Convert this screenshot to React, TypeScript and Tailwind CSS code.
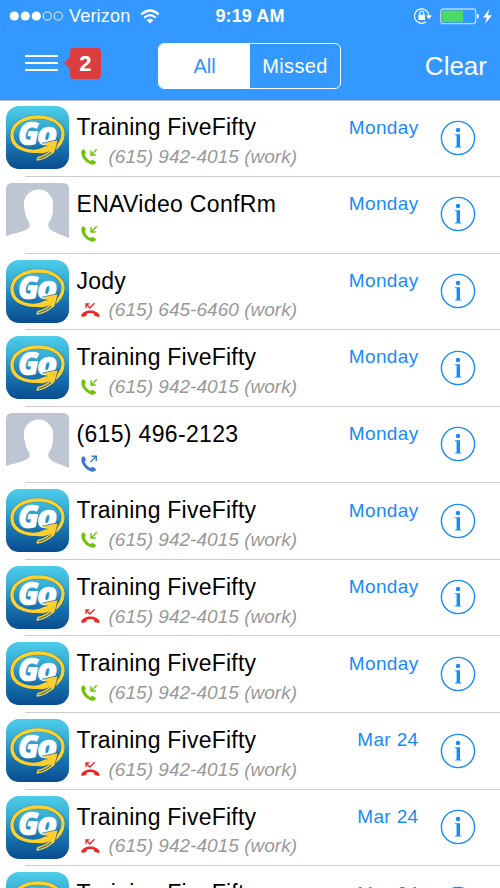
import React from "react";

type Kind = "in" | "missed" | "out";
type Call = { name: string; kind: Kind; number?: string; day: string; blank?: boolean };

const WORK = "(615) 942-4015 (work)";

const calls: Call[] = [
  { name: "Training FiveFifty", kind: "in", number: WORK, day: "Monday" },
  { name: "ENAVideo ConfRm", kind: "in", day: "Monday", blank: true },
  { name: "Jody", kind: "missed", number: "(615) 645-6460 (work)", day: "Monday" },
  { name: "Training FiveFifty", kind: "in", number: WORK, day: "Monday" },
  { name: "(615) 496-2123", kind: "out", day: "Monday", blank: true },
  { name: "Training FiveFifty", kind: "in", number: WORK, day: "Monday" },
  { name: "Training FiveFifty", kind: "missed", number: WORK, day: "Monday" },
  { name: "Training FiveFifty", kind: "in", number: WORK, day: "Monday" },
  { name: "Training FiveFifty", kind: "missed", number: WORK, day: "Mar 24" },
  { name: "Training FiveFifty", kind: "missed", number: WORK, day: "Mar 24" },
  { name: "Training FiveFifty", kind: "missed", number: WORK, day: "Mar 24" },
];

function GoLogo() {
  return (
    <svg className="block h-[63px] w-[63px]" viewBox="0 0 63 63">
      <defs>
        <linearGradient id="sky" x1="0" y1="0" x2="0" y2="1">
          <stop offset="0" stopColor="#4dcdea" />
          <stop offset="0.3" stopColor="#38afd6" />
          <stop offset="0.65" stopColor="#1973ae" />
          <stop offset="1" stopColor="#084c91" />
        </linearGradient>
      </defs>
      <rect width="63" height="63" rx="13" fill="url(#sky)" />
      <g fill="none" strokeLinecap="round">
        <path d="M40 42C27 49 6 44 6 29C6 18 18 11 32 11C46 11 57 18 57 28C57 38 45 47 32 52" stroke="#175f93" strokeOpacity="0.45" strokeWidth="4.6" />
        <path d="M40 42C27 49 6 44 6 29C6 18 18 11 32 11C46 11 57 18 57 28C57 35 52 41 46 45" stroke="#ffcf2c" strokeWidth="3.3" />
      </g>
      <g
        fontFamily="'Open Sans', 'Liberation Sans', sans-serif"
        fontSize="31"
        fontWeight="800"
        fontStyle="italic"
      >
        <g fill="none" stroke="#17689b" strokeWidth="1.8" strokeLinejoin="round" aria-hidden="true" />
        <text y="38.5" fill="#fff" stroke="#fff" strokeWidth="0.5">
          <tspan x="12" textLength="21" lengthAdjust="spacingAndGlyphs">G</tspan>
          <tspan x="31" textLength="20.5" lengthAdjust="spacingAndGlyphs">o</tspan>
        </text>
      </g>
      <path
        d="M24 46C32 46 38 42.5 42 40L36.5 37.5L52 34L48 47.5L45.5 43.5C41 47 37 47.5 33.5 47.3Z"
        fill="#ffcf2c"
      />
      <path d="M36 37.2L52.4 33.6L48.2 48" fill="none" stroke="#175f93" strokeWidth="0.7" />
      <path d="M45.5 44C42 48 37 50.5 32 51.5L31.2 54C36 53.5 43 50 48 45.5" fill="none" stroke="#ffcf2c" strokeWidth="1.5" strokeLinejoin="round" />
    </svg>
  );
}

function BlankPhoto() {
  return (
    <svg className="block h-[63px] w-[63px]" viewBox="0 0 63 63">
      <path
        d="M6 0H57Q63 0 63 6V55C57 52 48 50 44 46Q41 43 43 39C46 35 47 31 47 25C48 16 45 13 41 9C36 5 26 6 22 11C18 15 17 20 18.5 27C19.5 32 20.5 36 23.5 40V44C20 49 8 50 0 53V6Q0 0 6 0Z"
        fill="#bfc6d3"
      />
    </svg>
  );
}

function CallIcon({ kind }: { kind: Kind }) {
  if (kind === "missed") {
    return (
      <svg className="block h-[18px] w-[20px] shrink-0" viewBox="0 0 20 18">
        <path d="M0.2 13.6C3 6.9 15.6 6.9 18.6 13.6L18.1 15L13.6 14L13 11.7C11 10.8 7.8 10.8 5.8 11.7L5.2 14L0.7 15Z" fill="#ee2323" />
        <path d="M5 6V1.9H8.6M5.4 2.3L8.8 6L13.6 1.3" fill="none" stroke="#ee2323" strokeWidth="1.3" />
      </svg>
    );
  }
  const color = kind === "in" ? "#70c405" : "#3d78cf";
  return (
    <svg className="block h-[18px] w-[20px] shrink-0" viewBox="0 0 20 18">
      <path d="M1.4 1.7L3 1.2L5 4.6L3.7 6.4C4.5 9.2 6.7 11.7 9.3 12.9L11.5 11.7L15 14L14.7 15.3C13.9 16.5 12.2 17.1 10.2 16.5C5.4 15 1.1 10.6 0.4 5.8C.1 4 .4 2.5 1.4 1.7Z" fill={color} />
      <path
        d={kind === "in" ? "M15.8 1.2L10.3 6.7M10 2.3V7H14.8" : "M9.5 7L15 1.5M10.5 1.2H15.3V6"}
        fill="none"
        stroke={color}
        strokeWidth="1.4"
      />
    </svg>
  );
}

function InfoIcon() {
  return (
    <svg className="block h-[36px] w-[36px]" viewBox="0 0 36 36" fill="#188bfa">
      <circle cx="18" cy="18" r="16.6" fill="none" stroke="#188bfa" strokeWidth="1.4" />
      <circle cx="18" cy="10" r="2.2" />
      <path d="M15 14.2H20V26C20 26.5 20.4 26.7 21.4 26.8V27.6H14.8V26.8C16.2 26.7 16.6 26.5 16.6 26V15.5L15 15.1Z" />
    </svg>
  );
}

function Row({ call }: { call: Call }) {
  return (
    <li className="flex h-[76.6px] shrink-0 flex-col">
      <div className="flex flex-1 pl-[6px] pt-[6px]">
        {call.blank ? <BlankPhoto /> : <GoLogo />}
        <div className="ml-[7.5px] w-[240px] pt-[2px]">
          <div className={`h-[38px] whitespace-nowrap text-[23px] leading-[38px] text-black ${call.blank ? "tracking-[0.33px]" : "tracking-[0.24px]"}`}>
            {call.name}
          </div>
          <div className="flex h-[20px] pl-[4px]">
            <div className="pt-[2px]">
              <CallIcon kind={call.kind} />
            </div>
            <div className="ml-[8px] whitespace-nowrap pt-[0.7px] text-[19px] italic leading-[20px] tracking-[0.03px] text-[#999]">{call.number}</div>
          </div>
        </div>
        <div className="flex-1 pt-[9.3px] text-right text-[19px] leading-[24px] tracking-[0.35px] text-[#188bfa]">{call.day}</div>
        <div className="ml-[21.5px] mr-[24px] pt-[13.5px]">
          <InfoIcon />
        </div>
      </div>
      <div className="ml-[25px] h-[1px] bg-[#cdcdcd]" />
    </li>
  );
}

function StatusBar() {
  return (
    <div className="grid h-[32px] grid-cols-[1fr_70px_1fr] items-center text-[18px] leading-[32px]">
      <div className="flex items-center pl-[9px]">
        <svg className="h-[10px] w-[55px]" viewBox="0 0 55 10">
          <g fill="#fff">
            <circle cx="5.3" cy="5" r="4.6" />
            <circle cx="16.3" cy="5" r="4.6" />
            <circle cx="27.3" cy="5" r="4.6" />
          </g>
          <g fill="none" stroke="#fff" strokeWidth="0.9">
            <circle cx="38.3" cy="5" r="4.1" />
            <circle cx="49.3" cy="5" r="4.1" />
          </g>
        </svg>
        <span className="ml-[5px] tracking-[0.2px]">Verizon</span>
        <svg className="ml-[9.5px] h-[15px] w-[20px]" viewBox="0 0 20 15">
          <g fill="none" stroke="#fff" strokeWidth="2.2">
            <path d="M1.2 5.5Q10-2.5 18.8 5.5" />
            <path d="M4.2 8.8Q10 3.6 15.8 8.8" />
          </g>
          <path d="M6.7 11.2Q10 8.4 13.3 11.2L10 14.5Z" fill="#fff" />
        </svg>
      </div>
      <div className="whitespace-nowrap text-center font-bold tracking-[0.1px]">9:19 AM</div>
      <div className="flex items-center justify-end pr-[8px]">
        <svg className="h-[18px] w-[19px]" viewBox="0 0 19 18">
          <path d="M15.8 9.5V8.5A7.2 7.2 0 1 0 13 14.8" fill="none" stroke="#fff" strokeWidth="1.2" />
          <path d="M13 8.5H19L16 12Z" fill="#fff" />
          <rect x="5.4" y="7.8" width="6.6" height="5.3" rx="0.7" fill="#fff" />
          <path d="M6.7 8V6A2 2 0 0 1 10.7 6V8" fill="none" stroke="#fff" strokeWidth="1.2" />
        </svg>
        <svg className="ml-[8px] h-[17px] w-[39px]" viewBox="0 0 39 17">
          <rect x="0.7" y="1" width="35" height="14.6" rx="2.3" fill="none" stroke="#b4d8ff" strokeWidth="1.3" />
          <rect x="2.2" y="2.5" width="21" height="11.6" rx="0.6" fill="#4cd964" />
          <path d="M37 5.7Q39 6 39 8.3Q39 10.6 37 11Z" fill="#fff" />
        </svg>
        <svg className="ml-[4px] h-[15px] w-[9px]" viewBox="0 0 9 15">
          <path d="M6 .5L0 8.5H3.7L2.3 14.5L9 6.2H5Z" fill="#fff" />
        </svg>
      </div>
    </div>
  );
}

function NavBar() {
  return (
    <div className="flex h-[68px] items-start">
      <svg className="ml-[25px] mt-[21px] h-[20px] w-[33px]" viewBox="0 0 33 20">
        <path d="M0 3H33M0 10H33M0 17H33" stroke="#fff" strokeWidth="2.1" />
      </svg>
      <div className="ml-[5.5px] mt-[15.5px] flex items-center">
        <svg className="h-[12px] w-[6px]" viewBox="0 0 6 12">
          <path d="M6 0L0 6L6 12Z" fill="#dc3d3e" />
        </svg>
        <div className="h-[31.5px] w-[31.5px] rounded-[4px] bg-[#dc3d3e] text-center text-[22px] font-bold leading-[31px]">2</div>
      </div>
      <div className="ml-[57px] mt-[10.5px] flex h-[46px] w-[183px] overflow-hidden rounded-[6px] border-[1.5px] border-white text-[20px] leading-[45px]">
        <div className="w-[91px] bg-white text-center text-[#2f93ff]">All</div>
        <div className="flex-1 text-center tracking-[0.35px]">Missed</div>
      </div>
      <div className="mt-[14px] flex-1 pr-[13px] text-right text-[26px] leading-[40px]">Clear</div>
    </div>
  );
}

export default function App() {
  return (
    <main className="flex h-[888px] w-[500px] flex-col overflow-hidden bg-white font-['Liberation_Sans',Arial,sans-serif]">
      <header className="h-[100px] shrink-0 bg-[#3398ff] text-white">
        <StatusBar />
        <NavBar />
      </header>
      <div className="h-px shrink-0 bg-[#adb9cb]" />
      <ul className="-mt-[0.7px] flex flex-col">
        {calls.map((call, i) => (
          <Row key={i} call={call} />
        ))}
      </ul>
    </main>
  );
}
